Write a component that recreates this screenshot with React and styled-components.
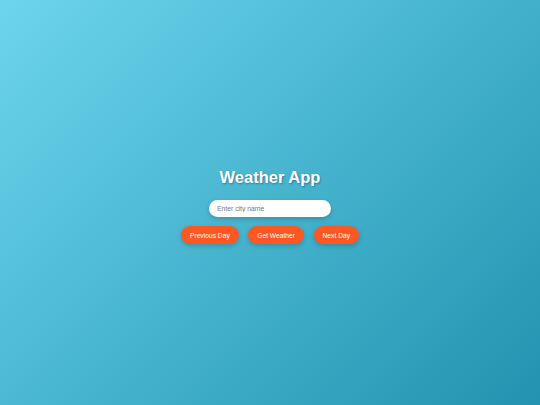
import React from "react";
import styled, { createGlobalStyle } from "styled-components";

const Global = createGlobalStyle`
  html, body { margin: 0; padding: 0; height: 100%; }
  body { font-family: "Liberation Sans", Arial, sans-serif; }
  #root { height: 100%; }
`;

const Page = styled.div`
  height: 100vh;
  box-sizing: border-box;
  padding-top: 7px;
  background: linear-gradient(135deg, #6dd5ed 0%, #2193b0 100%);
  display: flex;
  flex-direction: column;
  align-items: center;
  justify-content: center;
`;

const Title = styled.h1`
  margin: 0 0 13px;
  color: #fff;
  font-size: 16.5px;
  line-height: 19px;
  font-weight: bold;
  text-shadow: 1px 1px 2px rgba(0, 0, 0, 0.3);
`;

const Input = styled.input`
  width: 122px;
  height: 17px;
  box-sizing: border-box;
  border: none;
  border-radius: 9px;
  padding: 0 8px;
  font-family: "Liberation Sans", Arial, sans-serif;
  font-size: 6.8px;
  outline: none;
  box-shadow: 0 2px 5px rgba(0, 0, 0, 0.2);
  &::placeholder { color: #777; }
`;

const Row = styled.div`
  display: flex;
  gap: 9.5px;
  margin-top: 9px;
`;

const Button = styled.button`
  height: 18px;
  padding: 0 9px;
  border: none;
  border-radius: 9px;
  background: #ff5722;
  color: #fff;
  font-family: "Liberation Sans", Arial, sans-serif;
  font-size: 6.7px;
  cursor: pointer;
  box-shadow: 0 2px 5px rgba(0, 0, 0, 0.2);
`;

export default function App() {
  return (
    <>
      <Global />
      <Page>
        <Title>Weather App</Title>
        <Input placeholder="Enter city name" />
        <Row>
          <Button>Previous Day</Button>
          <Button>Get Weather</Button>
          <Button>Next Day</Button>
        </Row>
      </Page>
    </>
  );
}
